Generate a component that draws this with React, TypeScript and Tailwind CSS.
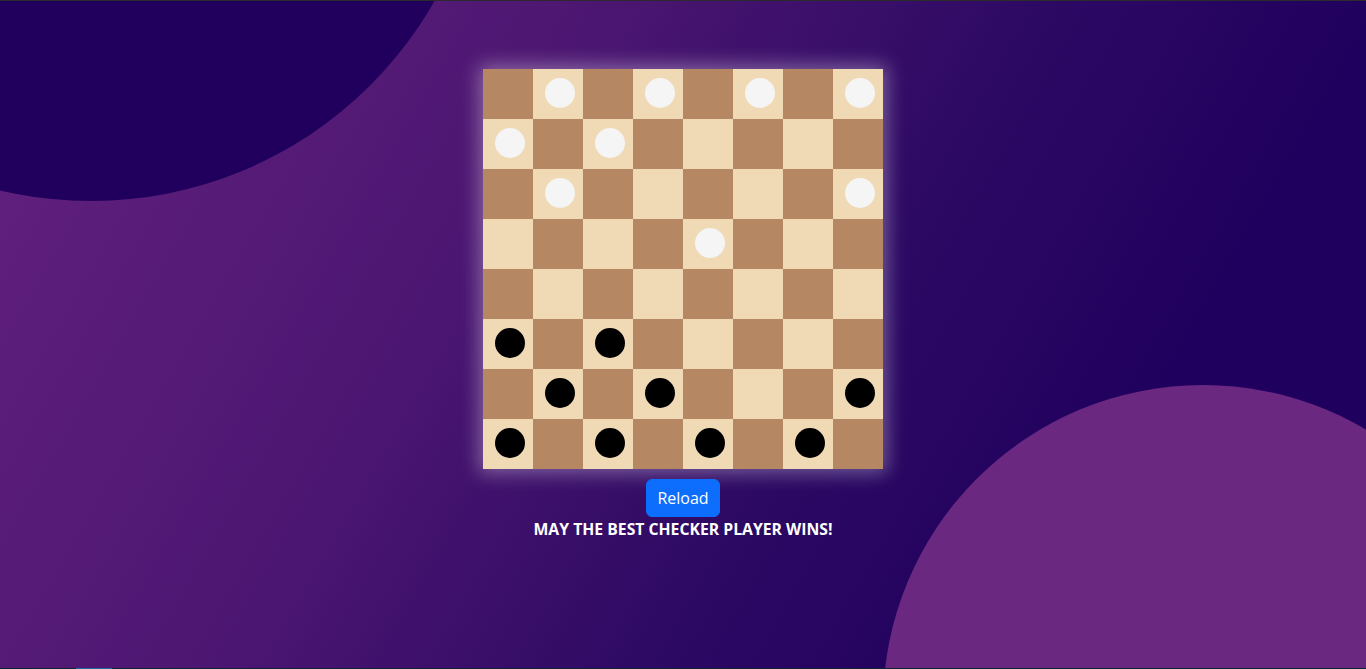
import React from "react";

// 0 = empty, 1 = white piece, 2 = black piece
const board: number[][] = [
  [0, 1, 0, 1, 0, 1, 0, 1],
  [1, 0, 1, 0, 0, 0, 0, 0],
  [0, 1, 0, 0, 0, 0, 0, 1],
  [0, 0, 0, 0, 1, 0, 0, 0],
  [0, 0, 0, 0, 0, 0, 0, 0],
  [2, 0, 2, 0, 0, 0, 0, 0],
  [0, 2, 0, 2, 0, 0, 0, 2],
  [2, 0, 2, 0, 2, 0, 2, 0],
];

const Square: React.FC<{ row: number; col: number; piece: number }> = ({
  row,
  col,
  piece,
}) => {
  const light = (row + col) % 2 === 1;
  return (
    <div
      className={`flex items-center justify-center w-[50px] h-[50px] ${
        light ? "bg-[#f0d9b5]" : "bg-[#b58863]"
      }`}
    >
      {piece === 1 && (
        <div className="relative left-[2px] top-[-1px] w-[30px] h-[30px] rounded-full bg-[#f5f5f5]" />
      )}
      {piece === 2 && (
        <div className="relative left-[2px] top-[-1px] w-[30px] h-[30px] rounded-full bg-black" />
      )}
    </div>
  );
};

export default function App() {
  const reload = () => window.location.reload();

  return (
    <div className="flex flex-col w-full h-[669px] overflow-hidden">
      <div className="h-px bg-[#2b2b2b]" />

      <main className="relative flex-1 overflow-hidden bg-[linear-gradient(120deg,#64217f_0%,#4b1671_35%,#2c0963_60%,#20005e_80%,#20005e_100%)]">
        {/* background blobs */}
        <div className="absolute w-[790px] h-[790px] rounded-full bg-[#20005c] left-[-304px] top-[-590px]" />
        <div className="absolute w-[640px] h-[640px] rounded-full bg-[#6b2880] left-[883px] top-[384px]" />

        <div className="relative flex flex-col items-center pt-[68px] font-['Open_Sans',sans-serif]">
          <div className="grid grid-cols-8 w-[400px] h-[400px] shadow-[0_0_18px_4px_rgba(255,255,255,0.35)]">
            {board.map((cells, r) =>
              cells.map((p, c) => <Square key={`${r}-${c}`} row={r} col={c} piece={p} />)
            )}
          </div>

          <button
            onClick={reload}
            className="mt-[10px] px-[10px] py-[6px] text-base leading-6 text-white bg-[#0d6efd] border border-[#0d6efd] rounded-[6px] cursor-pointer"
          >
            Reload
          </button>
          <p className="text-[15.75px] leading-6 font-bold text-white">
            MAY THE BEST CHECKER PLAYER WINS!
          </p>
        </div>
      </main>

      <div className="flex h-px bg-[#0f2433]">
        <div className="ml-[76px] w-[36px] bg-[#1d6aa0]" />
      </div>
    </div>
  );
}
